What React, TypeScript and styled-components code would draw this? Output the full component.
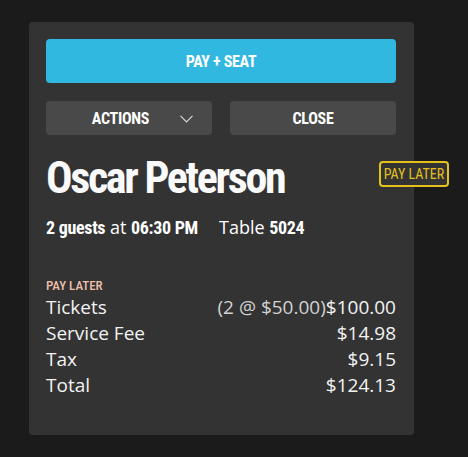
import React from 'react';
import styled, { createGlobalStyle } from 'styled-components';

const GlobalStyle = createGlobalStyle`
  html, body {
    margin: 0;
    padding: 0;
    background: #1b1b1b;
  }
`;

const condensed = `"Roboto Condensed", Roboto, sans-serif`;

const Page = styled.div`
  width: 468px;
  height: 457px;
  padding: 22px 0 0 29px;
  box-sizing: border-box;
  font-family: "Open Sans", "Noto Sans", sans-serif;
`;

const Card = styled.div`
  width: 385px;
  min-height: 413px;
  box-sizing: border-box;
  padding: 17px 18px 0 17px;
  background: #333333;
  border-radius: 4px;
`;

const PrimaryButton = styled.button`
  display: block;
  width: 100%;
  height: 44px;
  padding: 0;
  border: none;
  border-radius: 4px;
  background: #31b8e1;
  color: #ffffff;
  font-family: ${condensed};
  font-stretch: condensed;
  font-weight: 700;
  font-size: 16px;
  letter-spacing: -0.3px;
`;

const ButtonRow = styled.div`
  display: grid;
  grid-template-columns: 1fr 1fr;
  gap: 18px;
  margin-top: 18px;
`;

const GreyButton = styled.button<{ $menu?: boolean }>`
  position: relative;
  height: 34px;
  padding: 0 ${(p) => (p.$menu ? '17px' : '0')} 0 0;
  border: none;
  border-radius: 4px;
  background: #494949;
  color: #ffffff;
  font-family: ${condensed};
  font-stretch: condensed;
  font-weight: 700;
  font-size: 16px;
  letter-spacing: -0.3px;
`;

const Chevron = styled.svg`
  position: absolute;
  right: 19px;
  top: 14px;
`;

const NameRow = styled.div`
  display: flex;
  align-items: flex-start;
  justify-content: space-between;
  margin-top: 19px;
`;

const Name = styled.h1`
  margin: 0;
  font-family: ${condensed};
  font-stretch: condensed;
  font-weight: 700;
  font-size: 44px;
  letter-spacing: -2.3px;
  line-height: 48px;
  color: #fafafa;
`;

const Badge = styled.div`
  margin: 7px -53px 0 0;
  width: 66px;
  height: 22px;
  border: 2px solid #e4c11c;
  border-radius: 4px;
  background: #333333;
  color: #e4c11c;
  font-family: ${condensed};
  font-stretch: condensed;
  font-size: 14px;
  line-height: 22px;
  text-align: center;
  white-space: nowrap;
`;

const InfoLine = styled.div`
  margin-top: 13px;
  color: #ffffff;
  font-size: 18px;
  line-height: 24px;
  white-space: nowrap;
`;

const Strong = styled.span`
  font-family: ${condensed};
  font-stretch: condensed;
  font-weight: 700;
  font-size: 18px;
  letter-spacing: -0.3px;
`;

const Spacer = styled.span<{ $w: number }>`
  display: inline-block;
  width: ${(p) => p.$w}px;
`;

const SectionLabel = styled.div`
  margin-top: 38px;
  color: #ebbfa9;
  font-family: ${condensed};
  font-stretch: condensed;
  font-weight: 500;
  font-size: 13px;
  line-height: 16px;
`;

const Line = styled.div`
  display: flex;
  justify-content: space-between;
  color: #f2f2f2;
  font-size: 19px;
  line-height: 26px;
  white-space: nowrap;
`;

const Detail = styled.span`
  color: #d2d2d2;
`;

const charges = [
  { label: 'Tickets', detail: '(2 @ $50.00)', amount: '$100.00' },
  { label: 'Service Fee', amount: '$14.98' },
  { label: 'Tax', amount: '$9.15' },
  { label: 'Total', amount: '$124.13' },
];

const App: React.FC = () => {
  return (
    <Page>
      <GlobalStyle />
      <Card>
        <PrimaryButton>PAY + SEAT</PrimaryButton>
        <ButtonRow>
          <GreyButton $menu>
            ACTIONS
            <Chevron width="13" height="8" viewBox="0 0 13 8">
              <path d="M0.5 0.8l6 6 6-6" fill="none" stroke="#d6d6d6" strokeWidth="1.2" />
            </Chevron>
          </GreyButton>
          <GreyButton>CLOSE</GreyButton>
        </ButtonRow>
        <NameRow>
          <Name>Oscar Peterson</Name>
          <Badge>PAY LATER</Badge>
        </NameRow>
        <InfoLine>
          <Strong>2 guests</Strong> at <Strong>06:30 PM</Strong>
          <Spacer $w={21} />
          Table <Strong>5024</Strong>
        </InfoLine>
        <SectionLabel>PAY LATER</SectionLabel>
        {charges.map((c) => (
          <Line key={c.label}>
            <span>{c.label}</span>
            <span>
              {c.detail && <Detail>{c.detail}</Detail>}
              {c.amount}
            </span>
          </Line>
        ))}
      </Card>
    </Page>
  );
};

export default App;
